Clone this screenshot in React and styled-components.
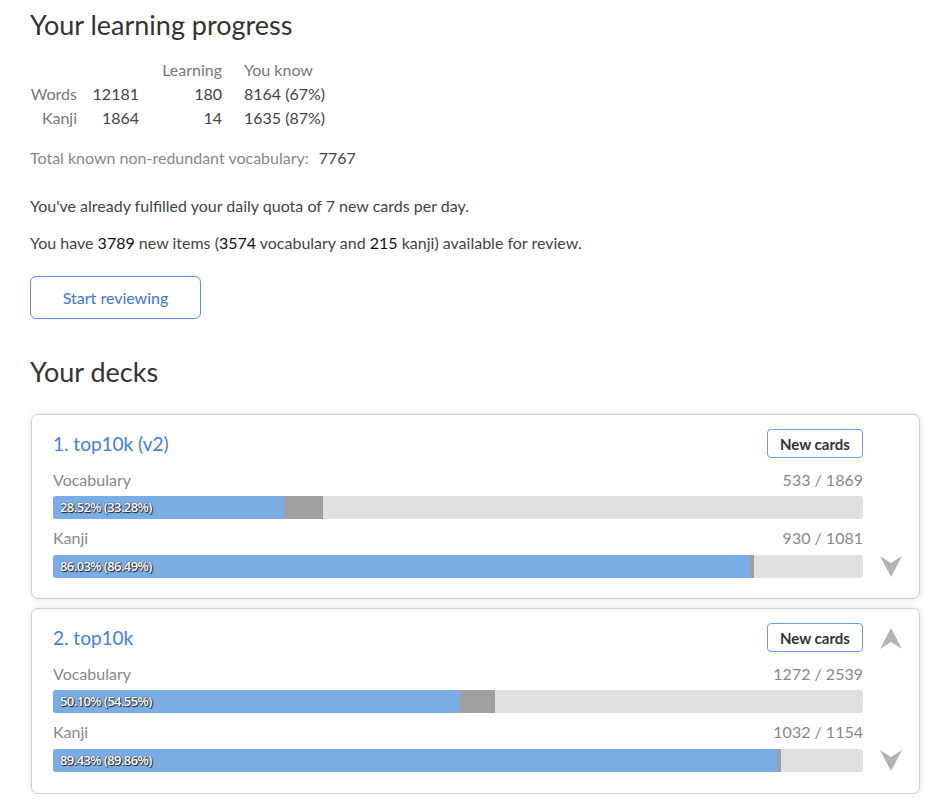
import React from "react";
import styled, { createGlobalStyle } from "styled-components";

const Global = createGlobalStyle`
  html, body { margin: 0; padding: 0; background: #fff; }
  body { font-family: Lato, "Open Sans", sans-serif; color: #444; }
`;

const Page = styled.div`
  padding: 8px 28px 0 30px;
  width: 890px;
`;

const Heading = styled.h2`
  font-family: Lato, sans-serif;
  font-weight: 400;
  font-size: 27px;
  color: #333;
  margin: ${(p) => p.$m || "0"};
  line-height: 34px;
`;

const StatsTable = styled.table`
  border-collapse: collapse;
  margin: 16px 0 0 0;
  font-size: 16px;
  line-height: 24px;
`;

const Th = styled.th`
  font-weight: 400;
  color: #777;
  text-align: ${(p) => p.$align || "right"};
  padding: 0 0 0 ${(p) => p.$pl || 0}px;
`;

const Td = styled.td`
  color: ${(p) => (p.$label ? "#777" : "#444")};
  text-align: ${(p) => p.$align || "right"};
  padding: 0 0 0 ${(p) => p.$pl || 0}px;
  min-width: ${(p) => p.$w || 0}px;
`;

const Total = styled.div`
  margin-top: 16px;
  font-size: 16px;
  color: #888;
  line-height: 24px;
  span { color: #444; margin-left: 10px; }
`;

const Para = styled.p`
  font-size: 16px;
  line-height: 24px;
  color: #444;
  margin: ${(p) => p.$m || "0"};
  b { font-weight: 400; color: #111; }
`;

const PrimaryButton = styled.button`
  margin-top: 21px;
  width: 171px;
  height: 43px;
  border: 1px solid #5b8fef;
  border-radius: 6px;
  background: #fff;
  color: #3a74dc;
  font-family: Lato, sans-serif;
  font-size: 16px;
  cursor: pointer;
`;

const DeckList = styled.div`
  display: flex;
  flex-direction: column;
  gap: 9px;
  margin-top: 25px;
`;

const Card = styled.div`
  border: 1px solid #cfcfcf;
  border-radius: 7px;
  box-shadow: 0 0 7px rgba(0, 0, 0, 0.12);
  display: flex;
  padding: ${(p) => p.$pad};
  width: 889px;
  margin-left: 1px;
  box-sizing: border-box;
`;

const Main = styled.div`
  width: 810px;
  margin-left: 21px;
`;

const TitleRow = styled.div`
  display: flex;
  justify-content: space-between;
  align-items: center;
  height: 29px;
`;

const DeckTitle = styled.a`
  color: #3f7ee4;
  font-size: 19px;
  text-decoration: none;
  line-height: 26px;
`;

const NewCards = styled.button`
  width: 96px;
  height: 29px;
  border: 1px solid #6a9ff0;
  border-radius: 4px;
  background: #fff;
  color: #333;
  font-family: Lato, sans-serif;
  font-weight: 700;
  font-size: 15px;
  padding: 0;
`;

const LabelRow = styled.div`
  display: flex;
  justify-content: space-between;
  font-size: 16px;
  color: #888;
  line-height: 24px;
  margin-top: ${(p) => p.$mt}px;
`;

const Track = styled.div`
  position: relative;
  height: 23px;
  background: #e0e0e0;
  border-radius: 3px;
  overflow: hidden;
  display: flex;
  margin-top: ${(p) => p.$mt}px;
`;

const Fill = styled.div`
  background: ${(p) => p.$c};
  height: 100%;
  flex: none;
`;

const BarText = styled.span`
  position: absolute;
  left: 7px;
  top: 0;
  line-height: 23px;
  font-family: "Open Sans", sans-serif;
  font-size: 13px;
  font-weight: 600;
  color: #fff;
  letter-spacing: -0.6px;
  text-shadow: 1px 1px 1px #222, 0 0 1px #222;
`;

const Side = styled.div`
  width: 56px;
  display: flex;
  flex-direction: column;
  justify-content: space-between;
  align-items: center;
`;

const ArrowSlot = styled.div`
  height: 21px;
  margin: ${(p) => p.$m};
  visibility: ${(p) => (p.$hide ? "hidden" : "visible")};
`;

const Arrow = ({ up }) => (
  <svg width="22" height="21" viewBox="0 0 22 21">
    <polygon
      fill="#b3b3b3"
      points={up ? "0,21 11,14 22,21 11,0" : "0,0 11,7 22,0 11,21"}
    />
  </svg>
);

const Bar = ({ blue, grey, text, mt }) => (
  <Track $mt={mt}>
    <Fill $c="#7aace6" style={{ width: `${blue}%` }} />
    <Fill $c="#a0a0a0" style={{ width: `${grey - blue}%` }} />
    <BarText>{text}</BarText>
  </Track>
);

const decks = [
  {
    title: "1. top10k (v2)",
    vocab: "533 / 1869",
    vb: 28.52, vg: 33.28,
    kanji: "930 / 1081",
    kb: 86.03, kg: 86.49,
    up: false,
    pad: "14px 0 20px 0",
  },
  {
    title: "2. top10k",
    vocab: "1272 / 2539",
    vb: 50.1, vg: 54.55,
    kanji: "1032 / 1154",
    kb: 89.43, kg: 89.86,
    up: true,
    pad: "14px 0 21px 0",
  },
];

const fmt = (n) => n.toFixed(2) + "%";

export default function App() {
  return (
    <Page>
      <Global />
      <Heading>Your learning progress</Heading>
      <StatsTable>
        <thead>
          <tr>
            <Th />
            <Th />
            <Th>Learning</Th>
            <Th $align="left" $pl={22}>You know</Th>
          </tr>
        </thead>
        <tbody>
          <tr>
            <Td $label $w={47}>Words</Td>
            <Td $w={62}>12181</Td>
            <Td $w={83}>180</Td>
            <Td $align="left" $pl={22}>8164 (67%)</Td>
          </tr>
          <tr>
            <Td $label>Kanji</Td>
            <Td>1864</Td>
            <Td>14</Td>
            <Td $align="left" $pl={22}>1635 (87%)</Td>
          </tr>
        </tbody>
      </StatsTable>
      <Total>
        Total known non-redundant vocabulary:<span>7767</span>
      </Total>
      <Para $m="24px 0 0 0">
        You've already fulfilled your daily quota of 7 new cards per day.
      </Para>
      <Para $m="13px 0 0 0">
        You have <b>3789</b> new items (<b>3574</b> vocabulary and <b>215</b> kanji) available for review.
      </Para>
      <PrimaryButton>Start reviewing</PrimaryButton>
      <Heading $m="36px 0 0 0">Your decks</Heading>
      <DeckList>
        {decks.map((d) => (
          <Card key={d.title} $pad={d.pad}>
            <Main>
              <TitleRow>
                <DeckTitle href="#">{d.title}</DeckTitle>
                <NewCards>New cards</NewCards>
              </TitleRow>
              <LabelRow $mt={10}>
                <span>Vocabulary</span>
                <span>{d.vocab}</span>
              </LabelRow>
              <Bar mt={4} blue={d.vb} grey={d.vg} text={`${fmt(d.vb)} (${fmt(d.vg)})`} />
              <LabelRow $mt={7}>
                <span>Kanji</span>
                <span>{d.kanji}</span>
              </LabelRow>
              <Bar mt={5} blue={d.kb} grey={d.kg} text={`${fmt(d.kb)} (${fmt(d.kg)})`} />
            </Main>
            <Side>
              <ArrowSlot $hide={!d.up} $m="5px 0 0 0">
                <Arrow up />
              </ArrowSlot>
              <ArrowSlot $m="0 0 1px 0">
                <Arrow />
              </ArrowSlot>
            </Side>
          </Card>
        ))}
      </DeckList>
    </Page>
  );
}
